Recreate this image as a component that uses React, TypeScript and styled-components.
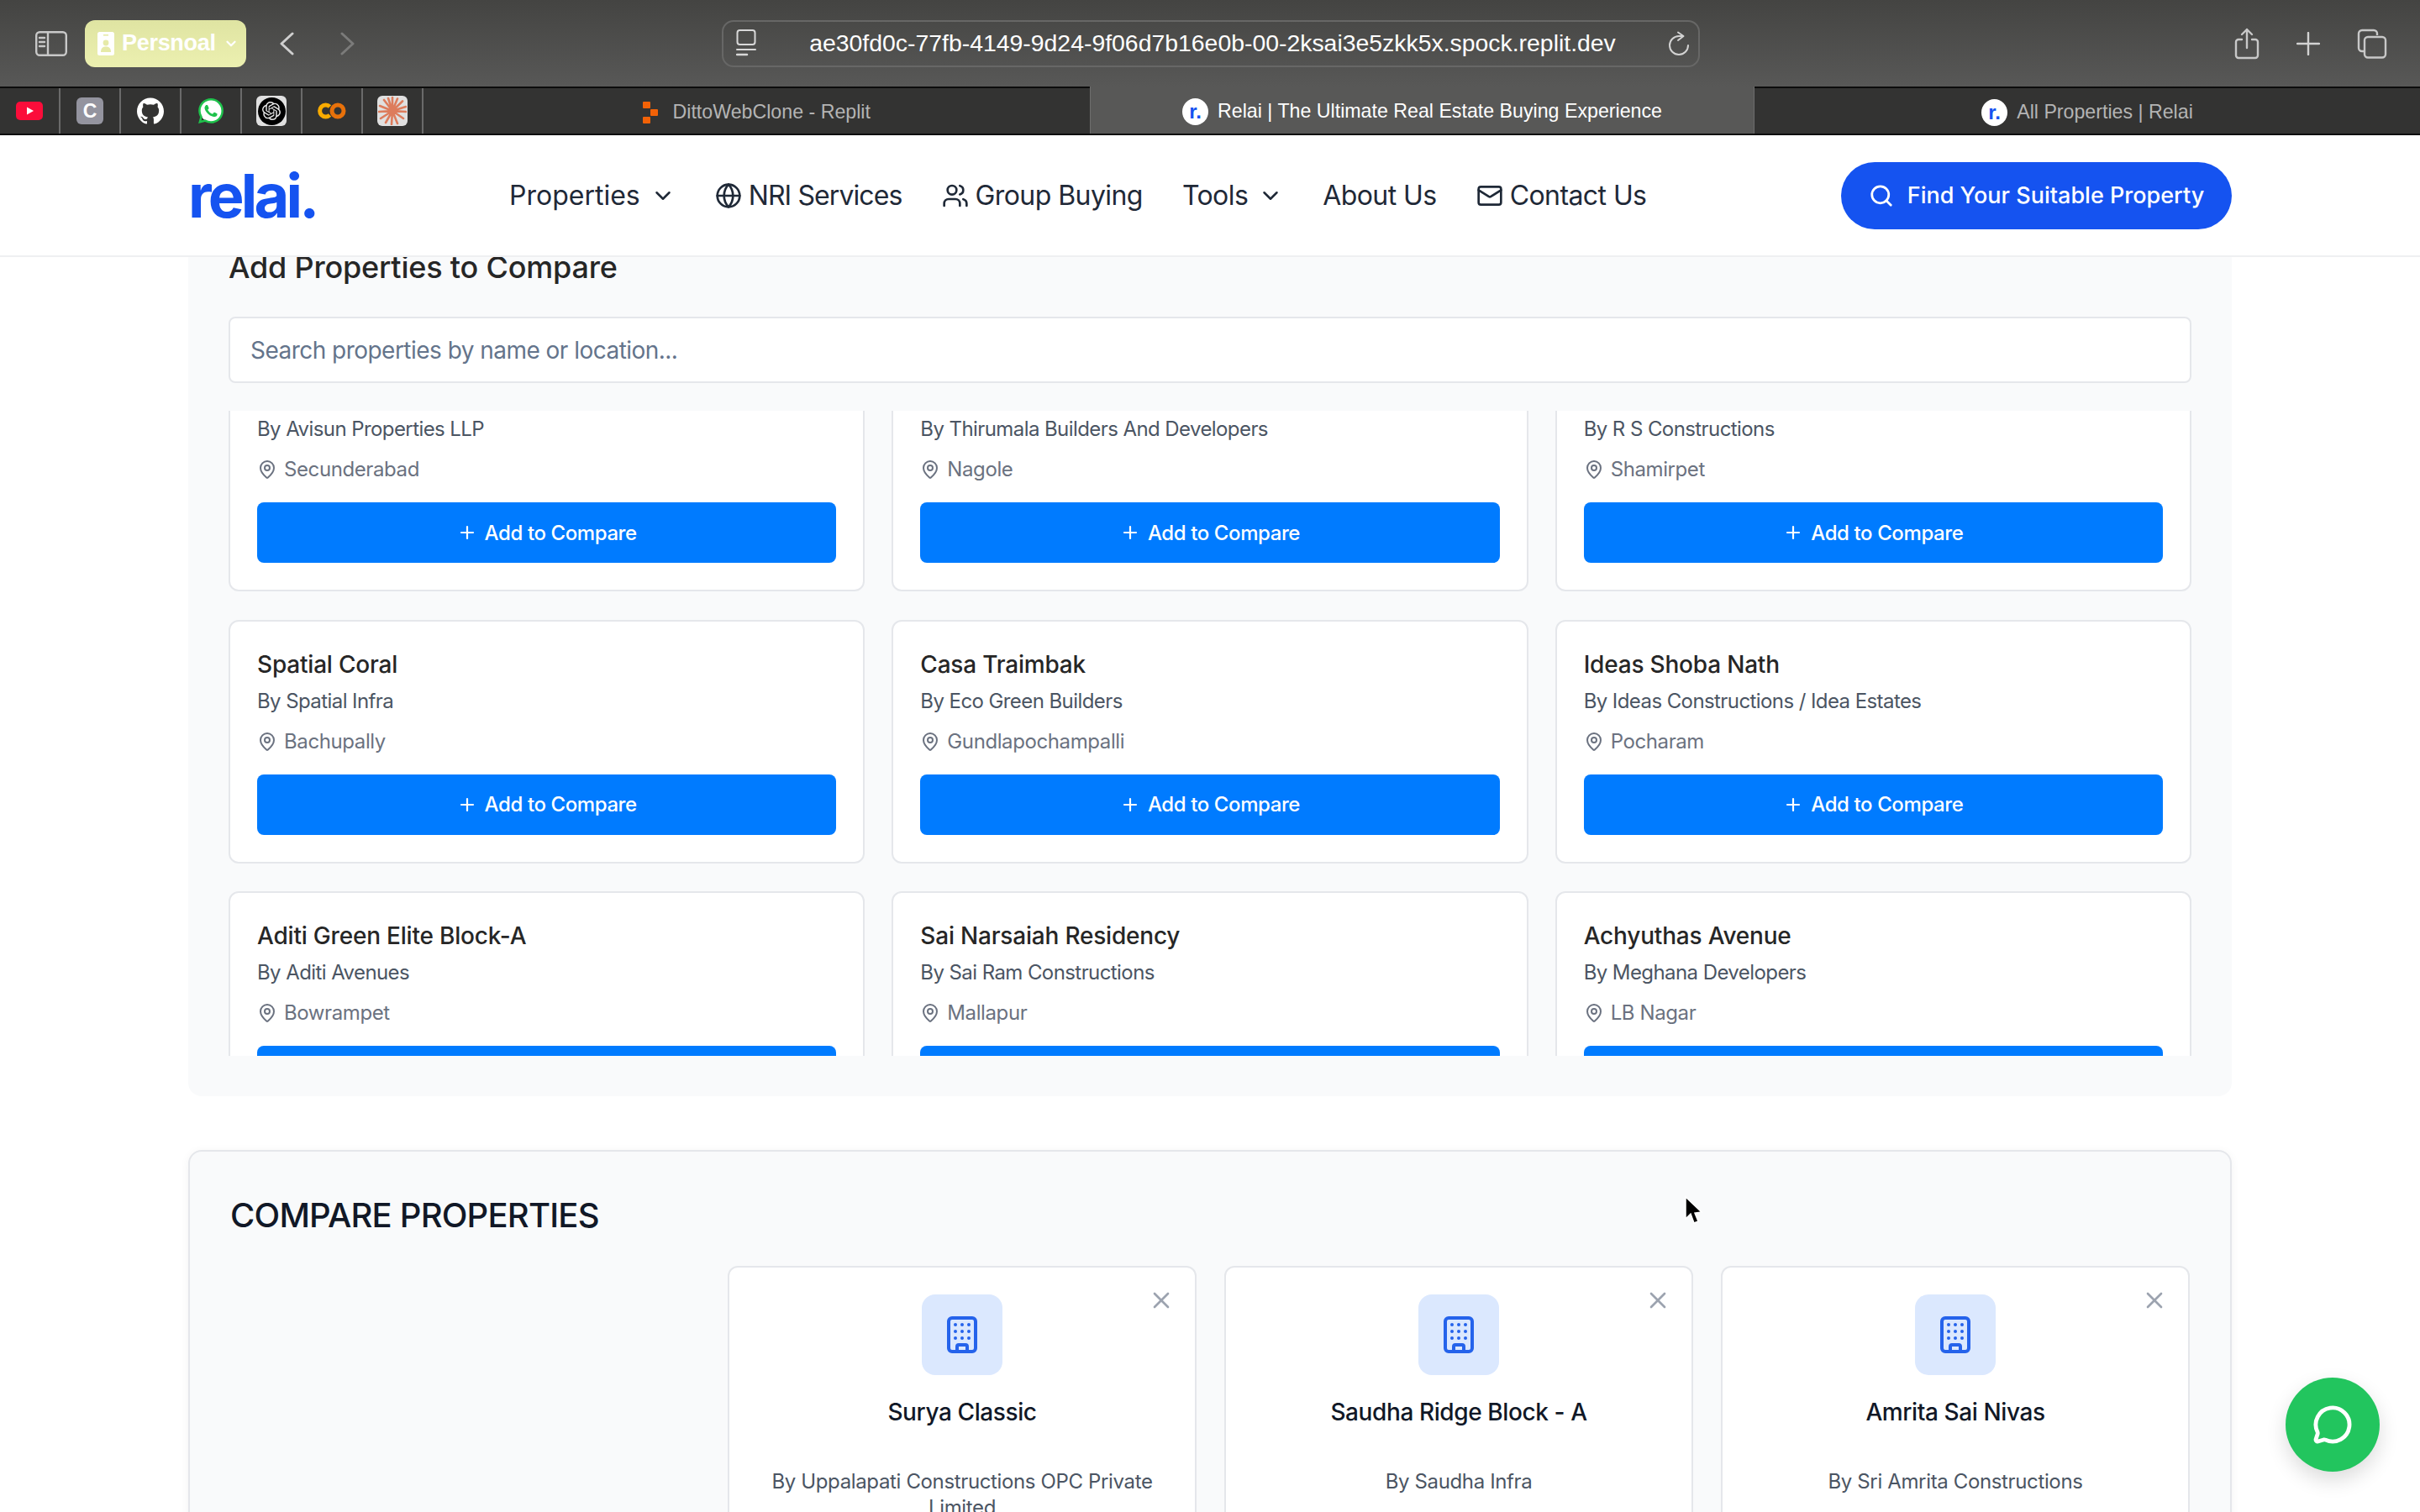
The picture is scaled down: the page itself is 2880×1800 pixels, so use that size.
import React from "react";
import styled, { createGlobalStyle } from "styled-components";
import { Building, ChevronDown, Globe, Mail, MapPin, MessageCircle, Plus, Search, Users, X } from "lucide-react";
import { SiGithub, SiOpenai, SiWhatsapp } from "react-icons/si";

const Global = createGlobalStyle`
  html, body { margin: 0; padding: 0; background: #fff; }
  * { box-sizing: border-box; }
  body { font-family: Inter, "Liberation Sans", sans-serif; }
`;

const Root = styled.div`
  position: relative;
  width: 2880px;
  height: 1800px;
  overflow: hidden;
  display: flex;
  flex-direction: column;
  background: #fff;
`;

const TopBar = styled.div`
  height: 103px;
  flex: none;
  display: flex;
  align-items: center;
  padding: 0 39px 0 42px;
  background: linear-gradient(180deg, #444442 0%, #585857 100%);
  color: #d4d4d4;
`;
const Pill = styled.div`
  width: 192px;
  height: 56px;
  margin-left: 21px;
  border-radius: 12px;
  background: linear-gradient(180deg, #dfe4a2 0%, #ecf0b0 100%);
  color: #fff;
  display: flex;
  align-items: center;
  gap: 9px;
  padding-left: 15px;
  font-family: "Liberation Sans", sans-serif;
  font-weight: 700;
  font-size: 27px;
  letter-spacing: -0.3px;
`;
const NavChevrons = styled.div`
  display: flex;
  gap: 55px;
  margin-left: 40px;
`;
const UrlBar = styled.div`
  width: 1164px;
  height: 56px;
  margin-left: 437px;
  border: 2px solid #676766;
  border-radius: 14px;
  display: flex;
  align-items: center;
  padding: 0 11px 0 15px;
  color: #fff;
`;
const UrlText = styled.span`
  flex: 1;
  text-align: center;
  font-family: "Liberation Sans", sans-serif;
  font-size: 28.4px;
  white-space: nowrap;
`;
const TopActions = styled.div`
  margin-left: auto;
  display: flex;
  align-items: center;
  gap: 44px;
`;

const TabStrip = styled.div`
  height: 58px;
  flex: none;
  display: flex;
  background: #333332;
  border-top: 2px solid #0c0c0c;
  border-bottom: 2px solid #0c0c0c;
  font-family: "Liberation Sans", sans-serif;
  font-size: 23.2px;
`;
const BookmarkCell = styled.div`
  width: 72px;
  flex: none;
  display: flex;
  align-items: center;
  justify-content: center;
  border-right: 2px solid #6a6a6a;
`;
const Tab = styled.div<{ $active?: boolean; $width: number }>`
  width: ${(p) => p.$width}px;
  flex: none;
  display: flex;
  align-items: center;
  justify-content: center;
  gap: 11px;
  padding-top: 3px;
  color: ${(p) => (p.$active ? "#fff" : "#b4b4b4")};
  font-weight: 400;
  background: ${(p) => (p.$active ? "#585857" : "transparent")};
  ${(p) => p.$active && "margin-top: -2px; border-left: 1px solid #6d6d6d; border-right: 1px solid #6d6d6d;"}
`;
const Favicon = styled.span`
  width: 31px;
  height: 32px;
  border-radius: 50%;
  background: #fff;
  color: #1553f0;
  font-size: 24px;
  font-weight: 800;
  display: flex;
  align-items: center;
  justify-content: center;
`;
const CTile = styled.span`
  width: 32px;
  height: 32px;
  border-radius: 6px;
  background: #94949f;
  color: #fff;
  font-size: 23px;
  font-weight: 700;
  font-family: "Liberation Sans", sans-serif;
  display: flex;
  align-items: center;
  justify-content: center;
`;
const IconTile = styled.span`
  width: 36px;
  height: 36px;
  border-radius: 6px;
  background: #e0e0e0;
  display: flex;
  align-items: center;
  justify-content: center;
`;
const BlackDisc = styled.span`
  width: 33px;
  height: 33px;
  border-radius: 50%;
  background: #000;
  color: #e8e8e8;
  display: flex;
  align-items: center;
  justify-content: center;
`;

const Nav = styled.header`
  height: 145px;
  flex: none;
  position: relative;
  z-index: 2;
  display: flex;
  align-items: center;
  padding: 0 224px;
  background: #fff;
  border-bottom: 2px solid #eff0f2;
  color: #1f2937;
`;
const Logo = styled.div`
  width: 382px;
  flex: none;
  font-size: 72px;
  font-weight: 700;
  letter-spacing: -3.8px;
  color: #1553f0;
  line-height: 1;
`;
const NavLinks = styled.nav`
  display: flex;
  align-items: center;
  gap: 47px;
`;
const NavLink = styled.a<{ $spacing?: number }>`
  display: flex;
  align-items: center;
  gap: 8px;
  font-size: 32px;
  font-weight: 400;
  letter-spacing: ${(p) => p.$spacing ?? -0.57}px;
  color: #1f2937;
  white-space: nowrap;
`;
const NavChevron = styled(ChevronDown)`
  margin-left: 4px;
`;
const Cta = styled.button`
  margin-left: auto;
  width: 465px;
  height: 80px;
  border: 0;
  border-radius: 40px;
  background: #1553f0;
  color: #fff;
  font: 500 27px Inter, sans-serif;
  display: flex;
  align-items: center;
  justify-content: center;
  gap: 16px;
`;

const Main = styled.main`
  flex: 1;
  min-height: 0;
  padding: 0 224px;
  display: flex;
  flex-direction: column;
  gap: 64px;
`;
const AddPanel = styled.section`
  flex: none;
  background: #f9fafb;
  border-radius: 0 0 16px 16px;
  padding: 0 48px 48px;
`;
const AddTitle = styled.h2`
  margin: 0 0 47px;
  font-size: 36px;
  line-height: 24px;
  font-weight: 500;
  letter-spacing: -0.2px;
  color: #262626;
`;
const SearchInput = styled.input`
  display: block;
  width: 100%;
  height: 79px;
  padding: 0 24px;
  border: 2px solid #e5e7eb;
  border-radius: 8px;
  background: #fff;
  font: 400 28px Inter, sans-serif;
  letter-spacing: -0.53px;
  &::placeholder { color: #64748b; opacity: 1; }
`;
const ListViewport = styled.div`
  height: 768px;
  margin-top: 33px;
  overflow: hidden;
`;
const ListGrid = styled.div`
  display: grid;
  grid-template-columns: repeat(3, 1fr);
  gap: 33.5px 32px;
  margin-top: -75px;
`;
const PropertyCard = styled.article`
  height: 290px;
  padding: 32px 32px;
  border: 2px solid #e5e7eb;
  border-radius: 12px;
  background: #fff;
`;
const PropertyName = styled.h3`
  margin: 0;
  min-height: 38px;
  font-size: 28px;
  line-height: 38px;
  font-weight: 500;
  letter-spacing: -0.2px;
  color: #262626;
`;
const Builder = styled.p`
  margin: 7px 0 0;
  font-size: 24px;
  line-height: 36px;
  letter-spacing: -0.58px;
  color: #4b5563;
`;
const Location = styled.div`
  margin-top: 12px;
  display: flex;
  align-items: center;
  gap: 8px;
  font-size: 24px;
  line-height: 36px;
  letter-spacing: -0.4px;
  color: #6b7280;
`;
const AddButton = styled.button`
  width: 100%;
  height: 72px;
  margin-top: 21px;
  border: 0;
  border-radius: 8px;
  background: #007bff;
  color: #fff;
  font: 500 24px Inter, sans-serif;
  letter-spacing: -0.4px;
  display: flex;
  align-items: center;
  justify-content: center;
  gap: 9px;
`;

const ComparePanel = styled.section`
  flex: none;
  border: 2px solid #e5e7eb;
  border-radius: 16px;
  background: #f9fafb;
  padding: 48px;
  box-shadow: 0 2px 12px rgba(0, 0, 0, 0.05);
`;
const CompareTitle = styled.h2`
  margin: 0 0 32px;
  font-size: 40px;
  line-height: 56px;
  font-weight: 500;
  letter-spacing: -0.8px;
  color: #111827;
`;
const CompareGrid = styled.div`
  display: grid;
  grid-template-columns: 559px repeat(3, 558px);
  gap: 33px;
`;
const CompareCard = styled.article`
  position: relative;
  height: 500px;
  padding: 32px 33px;
  border: 2px solid #e5e7eb;
  border-radius: 12px;
  background: #fff;
  text-align: center;
`;
const CloseButton = styled.span`
  position: absolute;
  top: 23px;
  right: 24px;
  color: #9ca3af;
  display: flex;
`;
const IconBox = styled.div`
  width: 96px;
  height: 96px;
  margin: 0 auto;
  border-radius: 16px;
  background: #dbe8fe;
  color: #2563eb;
  display: flex;
  align-items: center;
  justify-content: center;
`;
const CompareName = styled.h3`
  margin: 24px 0 47px;
  font-size: 28px;
  line-height: 40px;
  font-weight: 500;
  letter-spacing: -0.4px;
  color: #111827;
`;
const CompareBuilder = styled.p`
  margin: 0;
  font-size: 24px;
  line-height: 31px;
  letter-spacing: -0.36px;
  color: #4b5563;
`;
const ChatButton = styled.div`
  position: absolute;
  right: 48px;
  bottom: 48px;
  width: 112px;
  height: 112px;
  border-radius: 50%;
  background: #22c55e;
  color: #fff;
  display: flex;
  align-items: center;
  justify-content: center;
  box-shadow: 0 10px 24px rgba(0, 0, 0, 0.14);
`;
const Cursor = styled.svg`
  position: absolute;
  left: 2003px;
  top: 1423px;
`;

const properties = [
  ["", "By Avisun Properties LLP", "Secunderabad"],
  ["", "By Thirumala Builders And Developers", "Nagole"],
  ["", "By R S Constructions", "Shamirpet"],
  ["Spatial Coral", "By Spatial Infra", "Bachupally"],
  ["Casa Traimbak", "By Eco Green Builders", "Gundlapochampalli"],
  ["Ideas Shoba Nath", "By Ideas Constructions / Idea Estates", "Pocharam"],
  ["Aditi Green Elite Block-A", "By Aditi Avenues", "Bowrampet"],
  ["Sai Narsaiah Residency", "By Sai Ram Constructions", "Mallapur"],
  ["Achyuthas Avenue", "By Meghana Developers", "LB Nagar"],
];

const compared = [
  ["Surya Classic", "By Uppalapati Constructions OPC Private Limited"],
  ["Saudha Ridge Block - A", "By Saudha Infra"],
  ["Amrita Sai Nivas", "By Sri Amrita Constructions"],
];

const Stroke = { fill: "none", stroke: "currentColor", strokeWidth: 2.4, strokeLinecap: "round", strokeLinejoin: "round" } as const;

const SidebarIcon = () => (
  <svg width="38" height="30" viewBox="0 0 38 30" {...Stroke} stroke="#c8c8c8">
    <rect x="1.2" y="1.2" width="35.6" height="27.6" rx="4" />
    <path d="M15 1.2v27.6M5 8h6M5 13h6M5 18h6" />
  </svg>
);
const PersonCard = () => (
  <svg width="20" height="28" viewBox="0 0 20 28">
    <rect width="20" height="28" rx="2.5" fill="#fff" />
    <circle cx="10" cy="13" r="3.4" fill="#e6eaa8" />
    <path d="M4 24c0-5 2.5-6.5 6-6.5s6 1.500 6 6.500z" fill="#e6eaa8" />
    <rect x="7" y="3" width="6" height="1.600" fill="#e6eaa8" />
  </svg>
);
const Back = ({ dim }: { dim?: boolean }) => (
  <svg width="17" height="28" viewBox="0 0 17 28" fill="none" stroke={dim ? "#7b7b7a" : "#cfcfcf"} strokeWidth="3" strokeLinecap="round" strokeLinejoin="round">
    <path d={dim ? "M2 2l13 12L2 26" : "M15 2L2 14l13 12"} />
  </svg>
);
const SiteIcon = () => (
  <svg width="24" height="34" viewBox="0 0 24 34" fill="none" stroke="#d8d8d8" strokeWidth="2" strokeLinecap="round">
    <rect x="1.500" y="1" width="21" height="17" rx="3" />
    <path d="M1 24h22" />
    <path d="M1 30h12" strokeWidth="2.500" />
  </svg>
);
const Reload = () => (
  <svg width="24" height="30" viewBox="0 0 24 30" fill="none" stroke="#d2d2d2" strokeWidth="2" strokeLinecap="round" strokeLinejoin="round">
    <path d="M17 6H12A11 11 0 1 0 23 17" />
    <path d="M11 1.500L17.500 6L11 11" />
  </svg>
);
const Share = () => (
  <svg width="30" height="38" viewBox="0 0 30 38" fill="none" stroke="#c8c8c8" strokeWidth="2.400" strokeLinecap="round" strokeLinejoin="round">
    <path d="M9 14H5a3 3 0 0 0-3 3v16a3 3 0 0 0 3 3h20a3 3 0 0 0 3-3V17a3 3 0 0 0-3-3h-4" />
    <path d="M15 24V2M9 8l6-6 6 6" />
  </svg>
);
const NewTab = () => (
  <svg width="28" height="28" viewBox="0 0 28 28" stroke="#d2d2d2" strokeWidth="2.400" strokeLinecap="round">
    <path d="M14 1v26M1 14h26" />
  </svg>
);
const Tabs = () => (
  <svg width="36" height="36" viewBox="0 0 36 36" fill="none" stroke="#c8c8c8" strokeWidth="2.400">
    <path d="M8 27H6a4 4 0 0 1-4-4V6a4 4 0 0 1 4-4h14a4 4 0 0 1 4 4v2" />
    <rect x="9" y="10" width="25" height="24.500" rx="4" />
  </svg>
);
const YouTube = () => (
  <svg width="32" height="22" viewBox="0 0 32 22">
    <rect width="32" height="22" rx="5" fill="#fb0d3a" />
    <path d="M13 6.500l8 4.500-8 4.500z" fill="#fff" />
  </svg>
);
const Colab = () => (
  <svg width="34" height="20" viewBox="0 0 34 20" fill="none" strokeWidth="5">
    <path d="M14.500 5a7 7 0 1 0 0 10" stroke="#f9ab00" />
    <circle cx="24" cy="10" r="7" stroke="#e8710a" />
  </svg>
);
const Claude = () => (
  <svg width="34" height="34" viewBox="0 0 34 34" stroke="#dd7c5c" strokeWidth="2.600" strokeLinecap="round">
    <path d="M17 17L17 1M17 17L23 2.500M17 17L29 5.500M17 17L33 12M17 17L33 18M17 17L30 26M17 17L23 32M17 17L16 33M17 17L9 31M17 17L3 26M17 17L1 18M17 17L2 11M17 17L7 4M17 17L12 2" />
  </svg>
);
const Replit = () => (
  <svg width="18" height="26" viewBox="0 0 18 26" fill="#f26207">
    <rect width="9" height="8" rx="1" />
    <rect x="9" y="9" width="9" height="8" rx="1" />
    <rect y="18" width="9" height="8" rx="1" />
  </svg>
);
const ArrowCursor = () => (
  <Cursor width="24" height="36" viewBox="0 0 24 36">
    <path d="M3 2l0 26 6-6 4 11 5-2-4-10 8-1z" fill="#000" stroke="#fff" strokeWidth="1.500" />
  </Cursor>
);

const bookmarks = [
  <YouTube />,
  <CTile>C</CTile>,
  <SiGithub size={32} color="#fff" />,
  <SiWhatsapp size={30} color="#1fc24c" style={{ background: "radial-gradient(circle, #fff 60%, transparent 62%)" }} />,
  <IconTile>
    <BlackDisc>
      <SiOpenai size={22} />
    </BlackDisc>
  </IconTile>,
  <Colab />,
  <IconTile>
    <Claude />
  </IconTile>,
];

export default function App() {
  return (
    <Root>
      <Global />
      <TopBar>
        <SidebarIcon />
        <Pill>
          <PersonCard />
          <span>Persnoal</span>
          <ChevronDown size={18} strokeWidth={3} />
        </Pill>
        <NavChevrons>
          <Back />
          <Back dim />
        </NavChevrons>
        <UrlBar>
          <SiteIcon />
          <UrlText>ae30fd0c-77fb-4149-9d24-9f06d7b16e0b-00-2ksai3e5zkk5x.spock.replit.dev</UrlText>
          <Reload />
        </UrlBar>
        <TopActions>
          <Share />
          <NewTab />
          <Tabs />
        </TopActions>
      </TopBar>
      <TabStrip>
        {bookmarks.map((icon, i) => (
          <BookmarkCell key={i}>{icon}</BookmarkCell>
        ))}
        <Tab $width={793}>
          <Replit />
          <span>&nbsp;DittoWebClone - Replit</span>
        </Tab>
        <Tab $active $width={791}>
          <Favicon>r.</Favicon>
          <span>Relai | The Ultimate Real Estate Buying Experience</span>
        </Tab>
        <Tab $width={792}>
          <Favicon>r.</Favicon>
          <span>All Properties | Relai</span>
        </Tab>
      </TabStrip>
      <Nav>
        <Logo>relai.</Logo>
        <NavLinks>
          <NavLink $spacing={0}>
            Properties <NavChevron size={30} strokeWidth={2} />
          </NavLink>
          <NavLink $spacing={-0.9}>
            <Globe size={32} strokeWidth={2} /> NRI Services
          </NavLink>
          <NavLink>
            <Users size={32} strokeWidth={2} /> Group Buying
          </NavLink>
          <NavLink>
            Tools <NavChevron size={30} strokeWidth={2} />
          </NavLink>
          <NavLink>About Us</NavLink>
          <NavLink>
            <Mail size={32} strokeWidth={2} /> Contact Us
          </NavLink>
        </NavLinks>
        <Cta>
          <Search size={30} strokeWidth={2.2} />
          Find Your Suitable Property
        </Cta>
      </Nav>
      <Main>
        <AddPanel>
          <AddTitle>Add Properties to Compare</AddTitle>
          <SearchInput placeholder="Search properties by name or location..." />
          <ListViewport>
            <ListGrid>
              {properties.map(([name, builder, place]) => (
                <PropertyCard key={builder}>
                  <PropertyName>{name}</PropertyName>
                  <Builder>{builder}</Builder>
                  <Location>
                    <MapPin size={24} strokeWidth={2} />
                    {place}
                  </Location>
                  <AddButton>
                    <Plus size={24} strokeWidth={2.2} />
                    Add to Compare
                  </AddButton>
                </PropertyCard>
              ))}
            </ListGrid>
          </ListViewport>
        </AddPanel>
        <ComparePanel>
          <CompareTitle>COMPARE PROPERTIES</CompareTitle>
          <CompareGrid>
            <div />
            {compared.map(([name, builder]) => (
              <CompareCard key={name}>
                <CloseButton>
                  <X size={32} strokeWidth={2} />
                </CloseButton>
                <IconBox>
                  <Building size={48} strokeWidth={2} />
                </IconBox>
                <CompareName>{name}</CompareName>
                <CompareBuilder>{builder}</CompareBuilder>
              </CompareCard>
            ))}
          </CompareGrid>
        </ComparePanel>
      </Main>
      <ChatButton>
        <MessageCircle size={48} strokeWidth={2.4} />
      </ChatButton>
      <ArrowCursor />
    </Root>
  );
}
